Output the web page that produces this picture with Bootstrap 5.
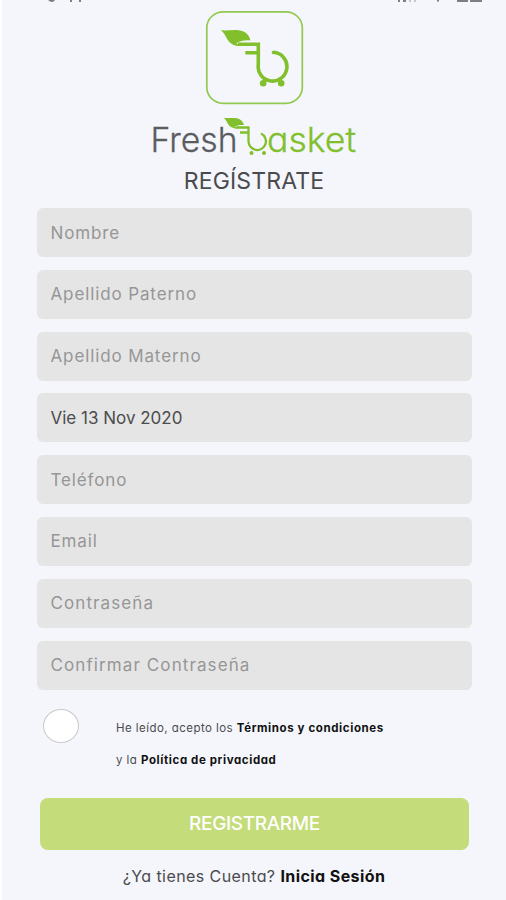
<!DOCTYPE html>
<html lang="es">
<head>
<meta charset="utf-8">
<meta name="viewport" content="width=device-width, initial-scale=1">
<title>Fresh basket - Regístrate</title>
<link href="https://cdn.jsdelivr.net/npm/bootstrap@5.3.0/dist/css/bootstrap.min.css" rel="stylesheet">
<style>
  body { background: #f4f6fb; font-family: Inter, "Open Sans", sans-serif; font-feature-settings: "cv11"; color: #4b4b4e; border-left: 2px solid #fdfdfe; }
  .screen { width: 504px; height: 900px; }
  .brand-art { height: 160px; }
  .page-title { font-size: 23px; line-height: 28px; margin-top: 7px; letter-spacing: .15px; }
  .fields { margin: 13px 34.5px 0 35px; gap: 12.8px; }
  .field { height: 49px; background: #e5e5e5 !important; border-radius: 6px; padding: 0 13.5px; font-size: 17px; letter-spacing: 0; color: #4c4c4c; }
  .field:placeholder-shown { letter-spacing: .88px; }
  .field[type="password"]:placeholder-shown { letter-spacing: 1.1px; }
  .field::placeholder { color: #969696; opacity: 1; }
  .terms { margin: 19px 33px 0 41px; height: 70px; }
  .round-check { width: 36px; height: 34px; border-radius: 50% !important; border: 1px solid #c9c9c9; margin: 0 37px 0 0; background-color: #fff; }
  .terms-text { font-size: 11.5px; line-height: 32px; margin-top: 3px; letter-spacing: .45px; }
  .terms-text b { letter-spacing: .6px; }
  .terms-text b, .login b { color: #111; }
  .submit { height: 52px; margin: 19px 37px 0 38px; background: #c4dc7a; color: #fff; border: 0; border-radius: 8px; font-size: 19px; padding: 1px 0 0; font-weight: 500; letter-spacing: -.35px; }
  .login { font-size: 16px; line-height: 24px; margin-top: 14px; letter-spacing: .42px; }
</style>
</head>
<body>
<main class="screen d-flex flex-column overflow-hidden">
  <svg class="brand-art flex-shrink-0" width="504" height="160" viewBox="2 0 504 160" role="img" aria-label="Fresh basket">
    <g fill="#55565a">
      <path d="M48 0h7q-1 2-3 2t-4-2zM70 0h2v2h-2zM79 0h2v2h-2zM398 0h2v2h-2zM403 0h3v2h-3zM437 0h2v1.500h-2zM457 0h11v2h-11zM470 0h12v2h-12z" opacity=".75"/>
      <path d="M409 0h2v2h-2zM414 0h2v2h-2z" opacity=".3"/>
    </g>
    <rect x="206.800" y="11.800" width="95.500" height="91.500" rx="16.500" ry="16" fill="none" stroke="#93c950" stroke-width="1.700"/>
    <path d="M221 30.300C228 30.800 234 29.500 240 30.500C246 31.500 249.500 35.500 250.500 40.500C245 39.800 240 41 236.500 43.200L240 46C234 46.200 230 43.500 227.500 39.500C225.500 36 224 33 221 30.300z" fill="#81c02c"/>
    <path d="M238 44.300h20.300v20.200a14.400 14.400 0 1 0 15.200-12.200M245.300 52.700H258" fill="none" stroke="#81c02c" stroke-width="3.600"/>
    <circle cx="273.500" cy="52.500" r="1.800" fill="#81c02c"/>
    <circle cx="263.200" cy="83.200" r="3.300" fill="#81c02c"/>
    <circle cx="281.200" cy="83.200" r="3.300" fill="#81c02c"/>
    <text x="150.500" y="151.500" font-family="Inter, sans-serif" font-weight="300" font-size="34" textLength="87" lengthAdjust="spacingAndGlyphs" fill="#5b5c60" stroke="#5b5c60" stroke-width=".3">Fresh</text>
    <path d="M224 118C229 118.300 233 117.500 237 118.300C241 119.300 243 122 244 125C240 124.700 237 125.300 234.500 126.700L237.500 128.500C233 128.700 230 127 228 124C226.700 121.700 226 120 224 118z" fill="#81c02c"/>
    <path d="M235.500 127.500h13v14a8.700 8.700 0 1 0 12.500-8M240 132.500h8" fill="none" stroke="#81c02c" stroke-width="2.300"/>
    <circle cx="251.500" cy="153" r="2" fill="#81c02c"/>
    <circle cx="264" cy="153" r="2" fill="#81c02c"/>
    <text x="267" y="151.500" font-family="Inter, sans-serif" font-weight="300" font-size="34" textLength="89" lengthAdjust="spacingAndGlyphs" fill="#81c02c" stroke="#81c02c" stroke-width=".3">asket</text>
  </svg>
  <h1 class="page-title text-center mb-0 fw-normal">REGÍSTRATE</h1>
  <form class="d-flex flex-column">
    <div class="fields d-flex flex-column">
      <input class="field form-control border-0" type="text" placeholder="Nombre" aria-label="Nombre">
      <input class="field form-control border-0" type="text" placeholder="Apellido Paterno" aria-label="Apellido Paterno">
      <input class="field form-control border-0" type="text" placeholder="Apellido Materno" aria-label="Apellido Materno">
      <input class="field form-control border-0" type="text" value="Vie 13 Nov 2020" aria-label="Fecha">
      <input class="field form-control border-0" type="tel" placeholder="Teléfono" aria-label="Teléfono">
      <input class="field form-control border-0" type="email" placeholder="Email" aria-label="Email">
      <input class="field form-control border-0" type="password" placeholder="Contraseña" aria-label="Contraseña">
      <input class="field form-control border-0" type="password" placeholder="Confirmar Contraseña" aria-label="Confirmar Contraseña">
    </div>
    <div class="terms d-flex align-items-start">
      <input id="accept" class="round-check form-check-input flex-shrink-0" type="checkbox">
      <label for="accept" class="terms-text">He leído, acepto los <b>Términos y condiciones</b><br>y la <b>Política de privacidad</b></label>
    </div>
    <button type="button" class="submit btn">REGISTRARME</button>
  </form>
  <div class="login text-center">¿Ya tienes Cuenta? <b>Inicia Sesión</b></div>
</main>
<script src="https://cdn.jsdelivr.net/npm/bootstrap@5.3.0/dist/js/bootstrap.bundle.min.js"></script>
</body>
</html>
